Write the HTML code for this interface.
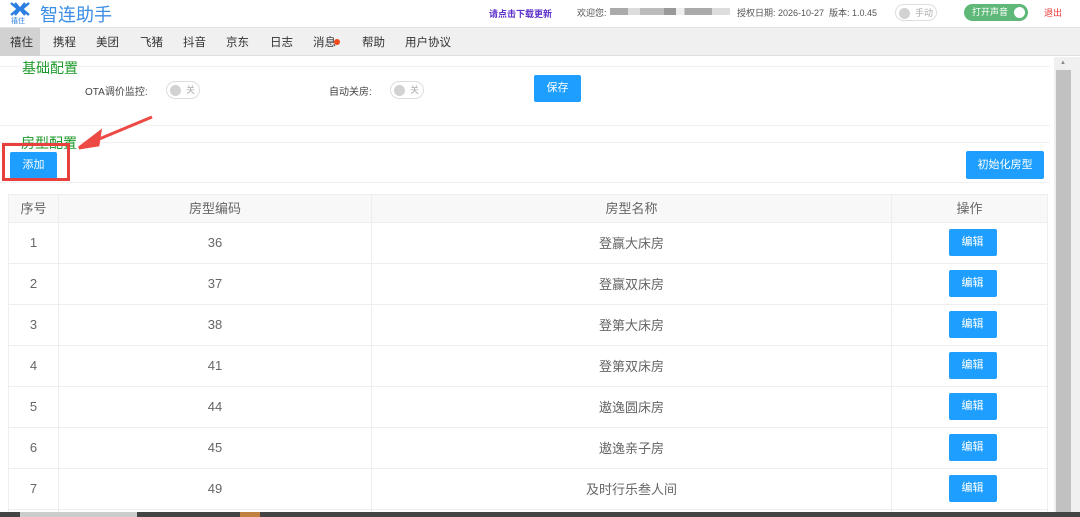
<!DOCTYPE html>
<html><head><meta charset="utf-8"><style>
*{margin:0;padding:0;box-sizing:border-box}
html,body{width:1080px;height:517px;overflow:hidden}
body{background:#fff;font-family:"Liberation Sans","Noto Sans CJK SC",sans-serif;color:#555;position:relative}
.a{position:absolute}
.btn{position:absolute;background:#1e9fff;color:#fff;font-size:11px;text-align:center;border-radius:2px}
.tw{position:absolute;left:8px;top:194px;width:1040px;height:318px;overflow:hidden}
table{width:1040px;border-collapse:collapse;font-size:13px;color:#666}
td,th{border:1px solid #eee;text-align:center;height:41px;font-weight:normal;vertical-align:middle;padding-bottom:2px}
th{height:28px;background:#f8f8f8;font-size:13px}
.eb{display:inline-block;vertical-align:middle;margin-left:6px;width:48px;height:27px;line-height:27px;background:#1e9fff;color:#fff;font-size:11px;border-radius:2px}
.sw{position:absolute;width:34px;height:18px;border:1px solid #ddd;border-radius:9px;font-size:9px;color:#aaa;line-height:16px;padding-left:19px}
.sw:before{content:"";position:absolute;left:3px;top:3px;width:11px;height:11px;border-radius:50%;background:#d2d2d2}
.nav span{position:absolute;top:34px;font-size:11.5px;color:#333}
</style></head><body>
<svg class="a" style="left:9px;top:2px" width="22" height="14" viewBox="0 0 22 14"><path d="M2 1 L9 7 L2 13 M20 1 L13 7 L20 13 M6 1 L16 13 M16 1 L6 13" stroke="#2a7fe0" stroke-width="2.4" fill="none"/></svg>
<div class="a" style="left:11px;top:16px;font-size:7px;color:#2a7fe0">禧住</div>
<div class="a" style="left:40px;top:1px;font-size:18px;color:#3a8ee6">智连助手</div>
<div class="a" style="left:489px;top:7px;font-size:9px;color:#5b2fc9;font-weight:bold">请点击下载更新</div>
<div class="a" style="left:577px;top:6px;font-size:9px;color:#555">欢迎您:</div>
<div class="a" style="left:610px;top:8px;width:120px;height:7px;background:linear-gradient(90deg,#aaa 0 15%,#ddd 15% 25%,#bbb 25% 45%,#999 45% 55%,#eee 55% 62%,#aaa 62% 85%,#ddd 85%)"></div>
<div class="a" style="left:737px;top:6px;font-size:9px;color:#555">授权日期: 2026-10-27 &nbsp;版本: 1.0.45</div>
<div class="sw" style="left:895px;top:4px;width:42px;height:17px;font-size:9px;padding-left:19px">手动</div>
<div class="a" style="left:964px;top:4px;width:64px;height:17px;border-radius:9px;background:#5fb878;color:#fff;font-size:9px;line-height:17px;padding-left:8px">打开声音<span style="position:absolute;right:3px;top:3px;width:11px;height:11px;border-radius:50%;background:#fff"></span></div>
<div class="a" style="left:1044px;top:6px;font-size:9px;color:#e33">退出</div>
<div class="a" style="left:0;top:27px;width:1080px;height:29px;background:#f0f0f0;border-top:1px solid #e2e2e2;border-bottom:1px solid #e0e0e0">
<div class="a" style="left:0;top:0;width:40px;height:28px;background:#d2d2d2"></div>
</div>
<div class="nav">
<span style="left:10px">禧住</span><span style="left:53px">携程</span><span style="left:96px">美团</span><span style="left:140px">飞猪</span><span style="left:183px">抖音</span><span style="left:226px">京东</span><span style="left:270px">日志</span><span style="left:313px">消息</span><span style="left:334px;top:39px;width:6px;height:6px;border-radius:50%;background:#f04a1a"></span><span style="left:362px">帮助</span><span style="left:405px">用户协议</span>
</div>
<div class="a" style="left:1054px;top:57px;width:26px;height:455px;background:#f0f0f0"></div>
<div class="a" style="left:1056px;top:70px;width:15px;height:442px;background:#c1c1c1"></div>
<div class="a" style="left:1060px;top:60px;font-size:6px;color:#888">▲</div>
<div class="a" style="left:0;top:66px;width:1050px;height:60px;border-top:1px solid #f0f0f0;border-bottom:1px solid #f0f0f0"></div>
<div class="a" style="left:22px;top:58px;font-size:14px;color:#1c9a2a">基础配置</div>
<div class="a" style="left:85px;top:83px;font-size:10px;color:#444">OTA调价监控:</div>
<div class="sw" style="left:166px;top:81px">关</div>
<div class="a" style="left:329px;top:83px;font-size:10px;color:#444">自动关房:</div>
<div class="sw" style="left:390px;top:81px">关</div>
<div class="btn" style="left:534px;top:75px;width:47px;height:27px;line-height:27px">保存</div>
<div class="a" style="left:0;top:142px;width:1050px;height:41px;border-top:1px solid #f0f0f0;border-bottom:1px solid #f0f0f0"></div>
<div class="a" style="left:21px;top:133px;font-size:14px;color:#1c9a2a">房型配置</div>
<div class="btn" style="left:10px;top:152px;width:47px;height:27px;line-height:27px">添加</div>
<div class="a" style="left:2px;top:143px;width:68px;height:38px;border:3px solid #e8403c"></div>
<svg class="a" style="left:70px;top:112px" width="85" height="45"><path d="M82 5 L22 30" stroke="#ee4a45" stroke-width="3"/><path d="M9 36 L30 20 L28 33 Z" fill="#ee4a45" stroke="#ee4a45" stroke-width="3"/></svg>
<div class="btn" style="left:966px;top:151px;width:78px;height:28px;line-height:28px">初始化房型</div>
<div class="tw"><table>
<tr><th style="width:50px">序号</th><th style="width:313px">房型编码</th><th style="width:520px">房型名称</th><th>操作</th></tr>
<tr><td>1</td><td>36</td><td>登赢大床房</td><td><span class="eb">编辑</span></td></tr>
<tr><td>2</td><td>37</td><td>登赢双床房</td><td><span class="eb">编辑</span></td></tr>
<tr><td>3</td><td>38</td><td>登第大床房</td><td><span class="eb">编辑</span></td></tr>
<tr><td>4</td><td>41</td><td>登第双床房</td><td><span class="eb">编辑</span></td></tr>
<tr><td>5</td><td>44</td><td>遨逸圆床房</td><td><span class="eb">编辑</span></td></tr>
<tr><td>6</td><td>45</td><td>遨逸亲子房</td><td><span class="eb">编辑</span></td></tr>
<tr><td>7</td><td>49</td><td>及时行乐叁人间</td><td><span class="eb">编辑</span></td></tr>
<tr><td></td><td></td><td></td><td><span class="eb">编辑</span></td></tr>
</table></div>
<div class="a" style="left:0;top:512px;width:1080px;height:5px;background:#444"></div>
<div class="a" style="left:20px;top:512px;width:117px;height:5px;background:#ccc"></div>
<div class="a" style="left:240px;top:512px;width:20px;height:5px;background:#c08040"></div>
</body></html>
